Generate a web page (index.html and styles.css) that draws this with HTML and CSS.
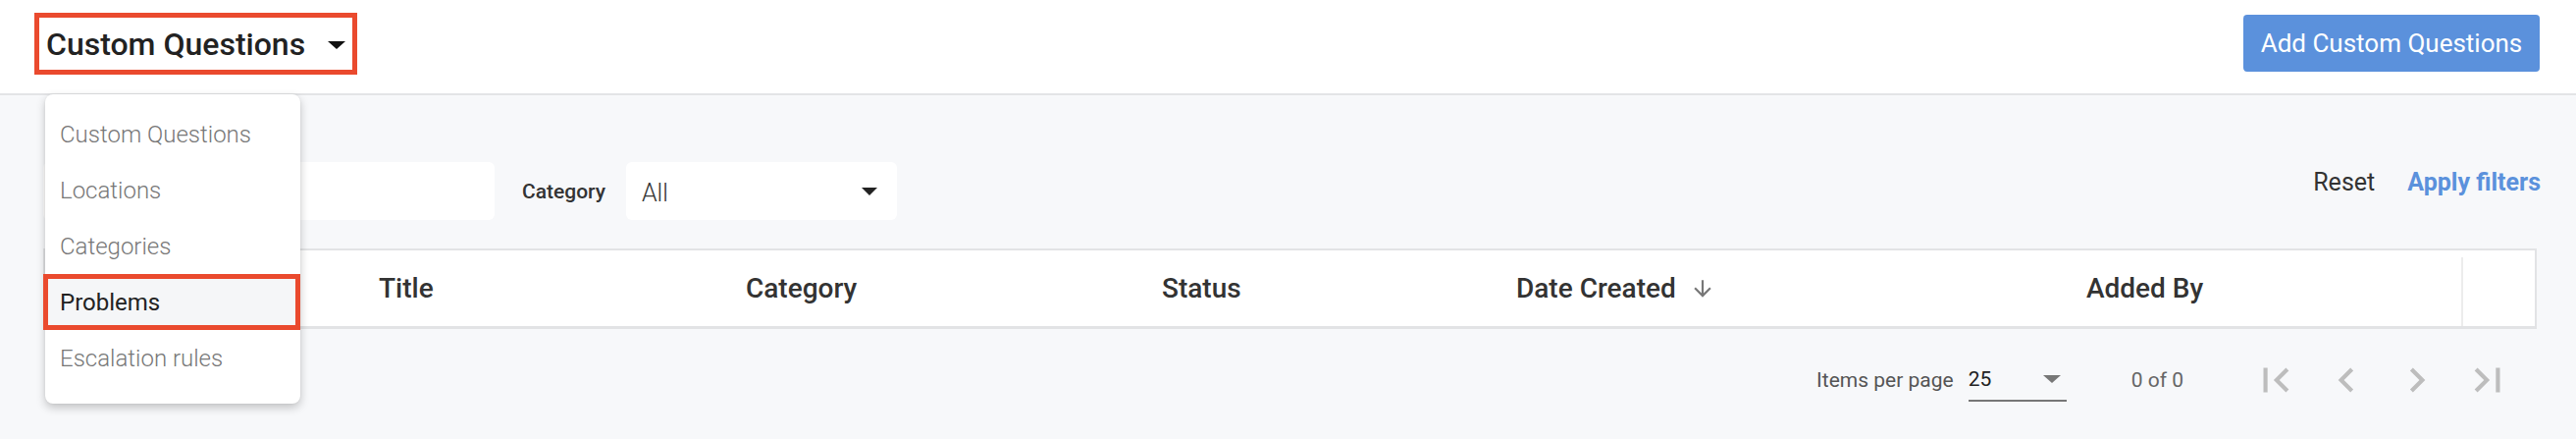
FILE: index.html
```html
<!DOCTYPE html>
<html>
<head>
<meta charset="utf-8">
<link rel="stylesheet" href="styles.css">
</head>
<body>
<div class="page">
  <header class="topbar">
    <div class="title-btn">
      <span class="title-text">Custom Questions</span>
      <span class="caret caret-lg"></span>
    </div>
    <button class="primary-btn">Add Custom Questions</button>
  </header>

  <section class="filters">
    <div class="search-input"></div>
    <label class="filter-label">Category</label>
    <div class="select-box">
      <span class="select-value">All</span>
      <span class="caret caret-md"></span>
    </div>
    <div class="filter-actions">
      <span class="reset">Reset</span>
      <span class="apply">Apply filters</span>
    </div>
  </section>

  <section class="table">
    <div class="thead">
      <div class="th"></div>
      <div class="th">Title</div>
      <div class="th">Category</div>
      <div class="th">Status</div>
      <div class="th">Date Created
        <svg class="sort-icon" viewBox="0 0 24 24"><path d="M20 12l-1.41-1.41L13 16.17V4h-2v12.17l-5.58-5.59L4 12l8 8 8-8z"/></svg>
      </div>
      <div class="th">Added By</div>
      <div class="th th-last"></div>
    </div>
  </section>

  <section class="pager">
    <span class="pager-label">Items per page</span>
    <div class="pager-select">
      <span class="pager-value">25</span>
      <span class="caret caret-sm"></span>
    </div>
    <span class="pager-range">0 of 0</span>
    <div class="pager-btns">
      <span class="pager-btn"><svg viewBox="0 0 24 24"><path d="M18.41 16.59L13.82 12l4.59-4.59L17 6l-6 6 6 6zM6 6h2v12H6z"/></svg></span>
      <span class="pager-btn"><svg viewBox="0 0 24 24"><path d="M15.41 7.41L14 6l-6 6 6 6 1.41-1.41L10.83 12z"/></svg></span>
      <span class="pager-btn"><svg viewBox="0 0 24 24"><path d="M10 6L8.59 7.41 13.17 12l-4.58 4.59L10 18l6-6z"/></svg></span>
      <span class="pager-btn"><svg viewBox="0 0 24 24"><path d="M5.59 7.41L10.18 12l-4.59 4.59L7 18l6-6-6-6zM16 6h2v12h-2z"/></svg></span>
    </div>
  </section>

  <nav class="menu">
    <div class="menu-item">Custom Questions</div>
    <div class="menu-item">Locations</div>
    <div class="menu-item">Categories</div>
    <div class="menu-item menu-item-active">Problems</div>
    <div class="menu-item">Escalation rules</div>
  </nav>
</div>
</body>
</html>
```

FILE: styles.css
```css
* { box-sizing: border-box; }
html, body {
  margin: 0;
  padding: 0;
}
body {
  background: #f7f8fa;
  font-family: Roboto, "Liberation Sans", sans-serif;
  color: #333;
}
.page {
  position: relative;
  width: 2625px;
  height: 447px;
  overflow: hidden;
}

/* top bar */
.topbar {
  height: 97px;
  background: #fff;
  border-bottom: 2px solid #e3e4e6;
  display: flex;
  justify-content: space-between;
  align-items: flex-start;
  padding: 0 37px 0 35px;
}
.title-btn {
  margin-top: 13px;
  height: 63px;
  width: 329px;
  border: 5px solid #ea4a2e;
  padding: 0 7px;
  display: flex;
  align-items: center;
  justify-content: space-between;
}
.title-text {
  font-size: 32px;
  font-weight: 500;
  color: #222;
}
.caret {
  width: 0;
  height: 0;
  border-left-style: solid;
  border-right-style: solid;
  border-top-style: solid;
  border-left-color: transparent;
  border-right-color: transparent;
}
.caret-lg {
  border-left-width: 9px;
  border-right-width: 9px;
  border-top-width: 8px;
  border-top-color: #111;
  margin-top: 2px;
}
.caret-md {
  border-left-width: 8px;
  border-right-width: 8px;
  border-top-width: 8px;
  border-top-color: #222;
}
.caret-sm {
  border-left-width: 9px;
  border-right-width: 9px;
  border-top-width: 8px;
  border-top-color: #777;
}
.primary-btn {
  margin-top: 15px;
  height: 58px;
  width: 302px;
  background: #5b91dc;
  color: #fff;
  border: none;
  border-radius: 4px;
  font-family: Roboto, "Liberation Sans", sans-serif;
  font-size: 26px;
  font-weight: 400;
  padding: 0;
}

/* filters */
.filters {
  margin-top: 68px;
  height: 59px;
  display: flex;
  align-items: center;
  padding: 0 36px 0 44px;
}
.search-input {
  width: 460px;
  height: 59px;
  background: #fff;
  border-radius: 6px;
}
.filter-label {
  margin-left: 28px;
  font-size: 21px;
  font-weight: 500;
  color: #333;
}
.select-box {
  margin-left: 21px;
  width: 276px;
  height: 59px;
  background: #fff;
  border-radius: 6px;
  display: flex;
  align-items: center;
  justify-content: space-between;
  padding: 0 20px 0 16px;
}
.select-value {
  font-size: 25px;
  font-weight: 300;
  color: #333;
  margin-top: 3px;
}
.filter-actions {
  margin-left: auto;
  align-self: flex-start;
  margin-top: 6px;
  display: flex;
  gap: 33px;
  font-size: 25px;
}
.reset {
  color: #333;
}
.apply {
  color: #5b91dc;
  font-weight: 700;
  font-size: 25px;
}

/* table */
.table {
  margin: 29px 40px 0 44px;
  background: #fff;
  border: 2px solid #e2e3e5;
  border-bottom-width: 3px;
}
.thead {
  display: grid;
  grid-template-columns: 340px 374px 424px 361px 581px 382px 1fr;
  height: 77px;
}
.th {
  display: flex;
  align-items: center;
  font-size: 28px;
  font-weight: 500;
  color: #333;
}
.th-last {
  border-left: 2px solid #ececec;
  margin-top: 7px;
}
.sort-icon {
  width: 26px;
  height: 26px;
  fill: #777;
  margin-left: 14px;
}

/* pager */
.pager {
  margin-top: 22px;
  height: 60px;
  display: flex;
  align-items: center;
  justify-content: flex-end;
  padding-right: 54px;
}
.pager-label {
  font-size: 21px;
  color: #555;
}
.pager-select {
  margin-left: 15px;
  width: 100px;
  height: 44px;
  border-bottom: 2px solid #777;
  display: flex;
  align-items: center;
  justify-content: space-between;
  padding: 0 6px 0 0;
}
.pager-value {
  font-size: 21px;
  color: #222;
}
.pager-range {
  margin-left: 66px;
  font-size: 21px;
  color: #666;
}
.pager-btns {
  margin-left: 58px;
  display: flex;
}
.pager-btn {
  width: 72px;
  height: 50px;
  display: flex;
  align-items: center;
  justify-content: center;
}
.pager-btn svg {
  width: 50px;
  height: 50px;
  fill: #bdbdbd;
}

/* dropdown menu overlay */
.menu {
  position: absolute;
  left: 46px;
  top: 96px;
  width: 260px;
  height: 315px;
  background: #fff;
  border-radius: 8px;
  box-shadow: 0 4px 10px rgba(0, 0, 0, 0.22), 0 0 2px rgba(0, 0, 0, 0.08);
  padding-top: 12px;
}
.menu-item {
  height: 57px;
  display: flex;
  align-items: center;
  padding-left: 15px;
  font-size: 24px;
  font-weight: 300;
  color: #777;
}
.menu-item-active {
  border: 5px solid #ea4a2e;
  background: #f5f6f8;
  padding-left: 12px;
  color: #222;
  font-weight: 400;
  margin-left: -2px;
}
```
